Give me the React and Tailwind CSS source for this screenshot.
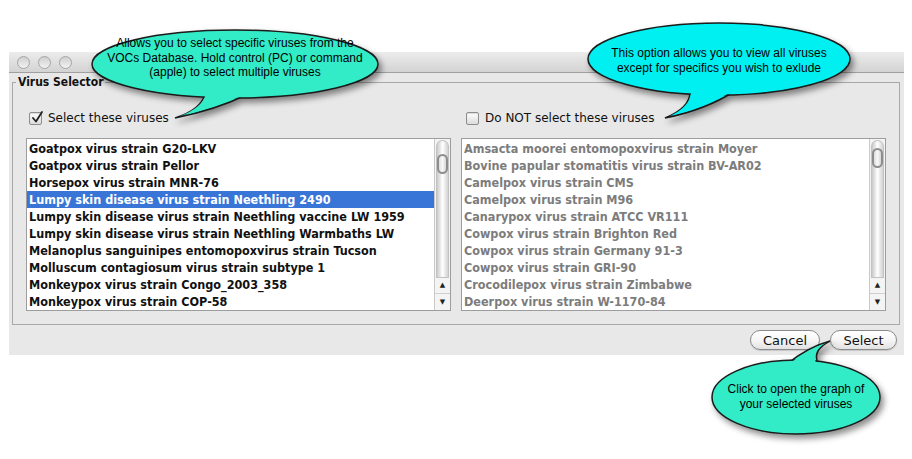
import React from 'react';

const leftViruses = [
  'Goatpox virus strain G20-LKV',
  'Goatpox virus strain Pellor',
  'Horsepox virus strain MNR-76',
  'Lumpy skin disease virus strain Neethling 2490',
  'Lumpy skin disease virus strain Neethling vaccine LW 1959',
  'Lumpy skin disease virus strain Neethling Warmbaths LW',
  'Melanoplus sanguinipes entomopoxvirus strain Tucson',
  'Molluscum contagiosum virus strain subtype 1',
  'Monkeypox virus strain Congo_2003_358',
  'Monkeypox virus strain COP-58',
];

const rightViruses = [
  'Amsacta moorei entomopoxvirus strain Moyer',
  'Bovine papular stomatitis virus strain BV-AR02',
  'Camelpox virus strain CMS',
  'Camelpox virus strain M96',
  'Canarypox virus strain ATCC VR111',
  'Cowpox virus strain Brighton Red',
  'Cowpox virus strain Germany 91-3',
  'Cowpox virus strain GRI-90',
  'Crocodilepox virus strain Zimbabwe',
  'Deerpox virus strain W-1170-84',
];

const condensed = { fontFamily: '"DejaVu Sans Condensed", "DejaVu Sans", sans-serif', fontStretch: 'condensed' };
const arial = { fontFamily: '"Liberation Sans", Arial, sans-serif' };

const Checkbox = ({ checked }) => (
  <div className="relative w-[13px] h-[13px] rounded-[2px] border border-[#8e8e8e] bg-gradient-to-b from-white to-[#dcdcdc] shadow-[inset_0_1px_1px_rgba(0,0,0,0.15)]">
    {checked && (
      <svg className="absolute left-[1px] -top-[2px]" width="13" height="13" viewBox="0 0 13 13">
        <path d="M2 7 L5 10.5 L11 1" fill="none" stroke="#222" strokeWidth="1.8" strokeLinecap="round" strokeLinejoin="round" />
      </svg>
    )}
  </div>
);

const ScrollBar = ({ thumbTop }) => (
  <div className="w-[16px] flex flex-col border-l border-[#c9c9c9] bg-[#f4f4f4]">
    <div className="flex-1 mx-[1px] mt-[1px] rounded-t-full rounded-b-[6px] border border-[#c2c2c2] bg-gradient-to-r from-[#c9c9c9] via-white to-[#d2d2d2] flex justify-center">
      <div className={`${thumbTop} w-[11px] h-[20px] rounded-full border-2 border-[#8d8d8d] bg-gradient-to-r from-[#dedede] via-[#f8f8f8] to-[#d6d6d6]`}></div>
    </div>
    <div className="h-[16px] flex items-center justify-center text-[7px] leading-none text-[#222] border-b border-[#d0d0d0]">▲</div>
    <div className="h-[16px] flex items-center justify-center text-[7px] leading-none text-[#222]">▼</div>
  </div>
);

const VirusList = ({ items, selected, muted, thumbTop }) => (
  <div className="h-[173px] flex border border-[#9d9d9d] bg-white">
    <div className="flex-1 py-[1px] overflow-hidden">
      {items.map((v, i) => (
        <div
          key={v}
          className={`h-[17px] px-[2px] leading-[17px] whitespace-nowrap font-bold text-[12.5px] ${
            i === selected ? 'bg-[#3875d7] text-white' : muted ? 'text-[#7c7c7c]' : 'text-[#111]'
          }`}
          style={condensed}
        >
          {v}
        </div>
      ))}
    </div>
    <ScrollBar thumbTop={thumbTop} />
  </div>
);

const AquaButton = ({ children, w }) => (
  <button className={`${w} h-[20px] rounded-full border border-[#8a8a8a] bg-gradient-to-b from-white via-[#f6f6f6] to-[#e2e2e2] text-[13px] leading-none text-[#111] shadow-[0_1px_1px_rgba(0,0,0,0.15)]`}>
    {children}
  </button>
);

const Callouts = () => (
  <svg className="absolute inset-0 pointer-events-none" width="912" height="459" viewBox="0 0 912 459">
    <defs>
      <filter id="shadow" x="-20%" y="-20%" width="140%" height="160%">
        <feDropShadow dx="3" dy="4" stdDeviation="3" floodColor="#000" floodOpacity="0.45" />
      </filter>
    </defs>
    <g filter="url(#shadow)">
      <path d="M205 94 Q201 110 175 118 Q215 110 246 95 Z" fill="#33ebc7" stroke="#1a1a1a" strokeWidth="1.5" />
      <ellipse cx="235" cy="64" rx="143" ry="34" fill="#33ebc7" stroke="#1a1a1a" strokeWidth="1.5" />
      <path d="M206 94 Q202 108 180 116 Q214 108 244 95 Z" fill="#33ebc7" />
    </g>
    <g filter="url(#shadow)">
      <path d="M690 92 Q690 108 665 118 Q705 110 735 91 Z" fill="#00f0f2" stroke="#1a1a1a" strokeWidth="1.5" />
      <ellipse cx="719" cy="59" rx="131" ry="36" fill="#00f0f2" stroke="#1a1a1a" strokeWidth="1.5" />
      <path d="M691 92 Q691 106 670 116 Q704 108 733 91 Z" fill="#00f0f2" />
    </g>
    <g filter="url(#shadow)">
      <path d="M787 364 Q808 347 830 341 Q812 350 818 363 Z" fill="#33ebc7" stroke="#1a1a1a" strokeWidth="1.5" />
      <ellipse cx="796" cy="397" rx="84" ry="37" fill="#33ebc7" stroke="#1a1a1a" strokeWidth="1.5" />
      <path d="M789 364 Q808 349 826 343 Q811 351 816 363 Z" fill="#33ebc7" />
    </g>
  </svg>
);

export default function App() {
  return (
    <div className="relative w-[912px] h-[459px] bg-white overflow-hidden" style={{ fontFamily: '"DejaVu Sans", sans-serif' }}>
      <div className="pt-[52px] pl-[9px]">
        <div className="w-[895px] flex flex-col bg-[#e8e8e8]">
          {/* title bar */}
          <div className="h-[21px] flex items-center gap-[8px] pl-[8px] bg-gradient-to-b from-[#ececec] to-[#d3d3d3] border-b border-[#9f9f9f]">
            {[0, 1, 2].map((i) => (
              <div key={i} className="w-[13px] h-[13px] rounded-full border border-[#a5a5a5] bg-gradient-to-b from-[#cfcfcf] to-[#f2f2f2]"></div>
            ))}
          </div>

          {/* body */}
          <div className="h-[282px] flex flex-col">
            <fieldset className="mt-[2px] ml-[3px] mr-[4px] border border-[#a8a8a8]">
              <legend className="ml-[3px] px-[2px] text-[12px] leading-[14px] font-bold text-[#111]" style={condensed}>
                Virus Selector
              </legend>
              <div className="grid grid-cols-2 gap-[10px] mt-[21px] px-[13px] pb-[13px]">
                <div className="flex flex-col gap-[12px]">
                  <div className="h-[16px] flex items-center gap-[6px] pl-[3px] text-[12px] text-[#111]">
                    <Checkbox checked />
                    <span>Select these viruses</span>
                  </div>
                  <VirusList items={leftViruses} selected={3} thumbTop="mt-[13px]" />
                </div>
                <div className="flex flex-col gap-[12px]">
                  <div className="h-[16px] flex items-center gap-[6px] pl-[5px] text-[12px] text-[#111]">
                    <Checkbox />
                    <span>Do NOT select these viruses</span>
                  </div>
                  <VirusList items={rightViruses} muted thumbTop="mt-[7px]" />
                </div>
              </div>
            </fieldset>
            <div className="flex-1 flex items-center justify-end gap-[10px] pr-[7px]">
              <AquaButton w="w-[70px]">Cancel</AquaButton>
              <AquaButton w="w-[67px]">Select</AquaButton>
            </div>
          </div>
        </div>
      </div>

      <Callouts />

      <div className="absolute left-[92px] top-[36px] w-[286px] text-center text-[12px] leading-[14.5px] text-black" style={arial}>
        Allows you to select specific viruses from the<br />VOCs Database. Hold control (PC) or command<br />(apple) to select multiple viruses
      </div>
      <div className="absolute left-[588px] top-[46px] w-[262px] text-center text-[12px] leading-[15px] text-black" style={arial}>
        This option allows you to view all viruses<br />except for specifics you wish to exlude
      </div>
      <div className="absolute left-[712px] top-[382px] w-[168px] text-center text-[12px] leading-[15px] text-black" style={arial}>
        Click to open the graph of<br />your selected viruses
      </div>
    </div>
  );
}
